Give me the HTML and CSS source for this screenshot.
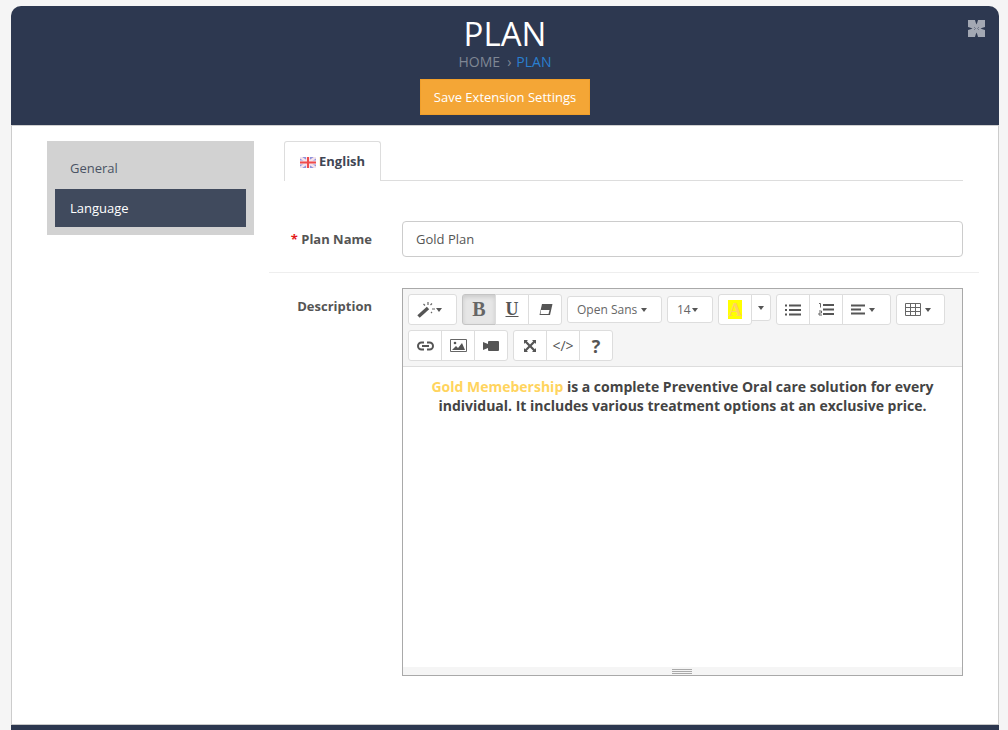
FILE: index.html
```html
<!DOCTYPE html>
<html lang="en">
<head>
<meta charset="utf-8">
<title>Plan</title>
<link rel="stylesheet" href="styles.css">
</head>
<body>
<div class="panel">
  <header class="head">
    <h1 class="title">PLAN</h1>
    <div class="crumbs"><span class="crumb-home">HOME</span><span class="crumb-sep">›</span><span class="crumb-cur">PLAN</span></div>
    <button class="save">Save Extension Settings</button>
    <svg class="expand" width="17" height="17" viewBox="0 0 17 17"><rect width="17" height="17" fill="#a3a8b3"/><path fill="#2d3850" d="M7 0h3L9.300 2.500 8.500 4.500 7.700 2.500zM7 17h3l-.7-2.500-.8-2-.8 2zM0 7v3l2.500-.7 2-.8-2-.8zM17 7v3l-2.500-.7-2-.8 2-.8z"/><path fill="none" stroke="#2d3850" stroke-width=".8" opacity=".55" d="M6 7l1.500 1.500L6 10M11 7L9.500 8.500 11 10"/></svg>
  </header>
  <div class="body">
    <nav class="side">
      <a class="side-item">General</a>
      <a class="side-item side-active">Language</a>
    </nav>
    <main class="content">
      <div class="tabs">
        <div class="tab">
          <svg class="flag" width="16" height="11" viewBox="0 0 16 11"><rect width="16" height="11" fill="#8f93dc"/><path d="M0 0l16 11M16 0L0 11" stroke="#f6e3ea" stroke-width="2.500"/><path d="M8 0v11M0 5.500h16" stroke="#f6e3ea" stroke-width="4"/><path d="M8 0v11M0 5.500h16" stroke="#ee4b4b" stroke-width="2"/></svg>
          <span class="tab-text">English</span>
        </div>
      </div>
      <div class="row row-name">
        <label class="lbl"><span class="req">*</span> Plan Name</label>
        <div class="input">Gold Plan</div>
      </div>
      <div class="row row-desc">
        <label class="lbl lbl-desc">Description</label>
        <div class="editor">
          <div class="toolbar">
            <div class="tools">
              <div class="grp"><button class="btn w49 left"><svg width="19" height="17" viewBox="0 0 19 17"><path d="M1.500 15.500L11 7" stroke="#555" stroke-width="3.500"/><path d="M11 1v3M15 8h3M6.500 3l1.500 1.500M15 2.500L13.500 4M14 11l1 1" stroke="#666" stroke-width="1.200"/></svg><i class="caret-s"></i></button></div>
              <div class="grp"><button class="btn w34 on b">B</button><button class="btn w33 u">U</button><button class="btn w32"><svg width="15" height="13" viewBox="0 0 15 13"><path d="M4 1h10.500l-2.500 11H1.500z" fill="#555"/><path d="M3 7h8.500l-1 4H2.500z" fill="#fff"/></svg></button></div>
              <div class="grp"><button class="btn w95 sel">Open Sans<i class="caret"></i></button></div>
              <div class="grp"><button class="btn w46 sel">14<i class="caret tight"></i></button></div>
              <div class="grp grp-color"><button class="btn w34 color"><span class="hl">A</span></button><button class="btn w19 short"><i class="caret none"></i></button></div>
              <div class="grp"><button class="btn w34"><svg width="16" height="12" viewBox="0 0 16 12"><path d="M4 1.500h12M4 6h12M4 10.500h12" stroke="#555" stroke-width="2"/><path d="M0 1.500h2M0 6h2M0 10.500h2" stroke="#555" stroke-width="2"/></svg></button><button class="btn w33"><svg width="16" height="13" viewBox="0 0 16 13"><path d="M5 2h11M5 6.500h11M5 11h11" stroke="#555" stroke-width="2"/><path d="M1 .5h1.500v4M1 8h2.500v2H1v2h3" stroke="#555" stroke-width=".9" fill="none"/></svg></button><button class="btn w48 left"><svg width="14" height="11" viewBox="0 0 14 11"><path d="M0 1.500h14M0 5.500h10M0 9.500h14" stroke="#555" stroke-width="2"/></svg><i class="caret"></i></button></div>
              <div class="grp"><button class="btn w49 left"><svg width="16" height="13" viewBox="0 0 16 13"><path d="M.5.500h15v12H.5zM.5 4.500h15M.5 8.500h15M5.500.500v12M10.500.500v12" fill="none" stroke="#666"/></svg><i class="caret"></i></button></div>
            </div>
            <div class="tools">
              <div class="grp"><button class="btn w33"><svg width="17" height="10" viewBox="0 0 17 10"><path d="M7 1.500H4.500a3.500 3.500 0 0 0 0 7H7M10 1.500h2.500a3.500 3.500 0 0 1 0 7H10M5 5h7" fill="none" stroke="#555" stroke-width="2"/></svg></button><button class="btn w33"><svg width="17" height="13" viewBox="0 0 17 13"><path d="M.5.500h16v12H.5z" fill="#fff" stroke="#666"/><path d="M2 11l4-4 2 2 4-5 3 7z" fill="#555"/><circle cx="5" cy="4" r="1.300" fill="#555"/></svg></button><button class="btn w34"><svg width="16" height="10" viewBox="0 0 16 10"><rect x="5" y="0" width="11" height="10" rx="1" fill="#555"/><path d="M5 3L0 1v8l5-2z" fill="#555"/></svg></button></div>
              <div class="grp"><button class="btn w33"><svg width="14" height="14" viewBox="0 0 14 14"><path d="M1 1h4L3.800 2.200 7 5.400l3.200-3.200L9 1h4v4l-1.200-1.200L8.600 7l3.200 3.200L13 9v4H9l1.200-1.200L7 8.600l-3.200 3.200L5 13H1V9l1.200 1.200L5.400 7 2.200 3.800 1 5z" fill="#555"/></svg></button><button class="btn w33 code">&lt;/&gt;</button><button class="btn w34 help">?</button></div>
            </div>
          </div>
          <div class="text">
            <p class="para"><span class="gold">Gold Memebership</span> is a complete Preventive Oral care solution for every individual. It includes various treatment options at an exclusive price.</p>
          </div>
          <div class="resize"><i class="grip"></i></div>
        </div>
      </div>
    </main>
  </div>
  <footer class="foot"></footer>
</div>
</body>
</html>
```

FILE: styles.css
```css
* { box-sizing: border-box; }
html, body { height: 100%; }
body {
  margin: 0;
  background: #f5f5f5;
  font-family: "Open Sans", "Liberation Sans", sans-serif;
  color: #444;
  overflow: hidden;
}
.panel {
  width: 988px;
  height: 730px;
  margin: 6px 0 0 11px;
  background: #fff;
  border-left: 1px solid #ccc;
  border-right: 1px solid #ccc;
  border-radius: 10px 10px 0 0;
  display: flex;
  flex-direction: column;
}
.head {
  position: relative;
  height: 120px;
  margin: 0 -1px;
  background: #2d3850;
  border-radius: 10px 10px 0 0;
  border-bottom: 1px solid #d0d0d0;
  text-align: center;
  flex: none;
}
.title {
  margin: 0;
  padding-top: 7px;
  font-size: 33px;
  line-height: 41px;
  font-weight: 400;
  color: #fff;
}
.crumbs {
  font-size: 14px;
  line-height: 15px;
}
.crumb-home { color: #7f8794; }
.crumb-sep { color: #7f8794; margin: 0 5px 0 7px; }
.crumb-cur { color: #2a7fcf; }
.save {
  display: block;
  margin: 10px auto 0;
  width: 170px;
  height: 36px;
  padding: 0;
  background: #f4a636;
  border: 1px solid #f19f2a;
  color: #fff;
  font: 13px/34px "Open Sans", sans-serif;
}
.expand { position: absolute; top: 14px; right: 14px; }
.body {
  flex: none;
  height: 598px;
  display: flex;
  align-items: flex-start;
}
.side {
  width: 207px;
  margin: 15px 15px 0 35px;
  padding: 8px;
  background: #d2d2d2;
  flex: none;
}
.side-item {
  display: block;
  height: 40px;
  padding-left: 15px;
  font-size: 13px;
  line-height: 39px;
  color: #4a5364;
}
.side-active {
  height: 38px;
  line-height: 38px;
  background: #404a5d;
  color: #fff;
}
.content {
  width: 710px;
  flex: none;
  padding-top: 15px;
}
.tabs {
  margin: 0 16px 0 15px;
  height: 40px;
  border-bottom: 1px solid #ddd;
}
.tab {
  width: 97px;
  height: 40px;
  background: #fff;
  border: 1px solid #ddd;
  border-bottom: 0;
  border-radius: 3px 3px 0 0;
  display: flex;
  align-items: center;
  padding: 0 0 0 15px;
  gap: 3px;
  font-size: 13px;
  font-weight: 700;
  color: #3f4654;
}
.tab-text { margin-bottom: 2px; }
.flag { display: block; margin-top: 2px; }
.row { display: flex; }
.row-name {
  margin-top: 40px;
  padding-bottom: 15px;
  border-bottom: 1px solid #eee;
}
.row-desc { padding-top: 15px; }
.lbl {
  width: 103px;
  margin-right: 30px;
  text-align: right;
  font-size: 13px;
  font-weight: 700;
  line-height: 36px;
  color: #555;
}
.lbl-desc { line-height: 36px; }
.req { color: #e31b1b; }
.input {
  width: 561px;
  height: 36px;
  border: 1px solid #ccc;
  border-radius: 4px;
  padding-left: 13px;
  font-size: 13px;
  line-height: 34px;
  color: #555;
}
.editor {
  width: 561px;
  height: 388px;
  border: 1px solid #a9a9a9;
  display: flex;
  flex-direction: column;
}
.toolbar {
  flex: none;
  height: 78px;
  background: #f5f5f5;
  border-bottom: 1px solid #ddd;
  padding: 5px 0 0 5px;
}
.tools {
  display: flex;
  gap: 5px;
  height: 31px;
  margin-bottom: 5px;
}
.grp { display: flex; height: 31px; align-items: center; }
.grp-color { align-items: flex-start; }
.btn {
  height: 31px;
  padding: 0;
  margin: 0 0 0 -1px;
  background: #fff;
  border: 1px solid #ddd;
  border-radius: 0;
  color: #555;
  display: flex;
  align-items: center;
  justify-content: center;
  font-family: "Open Sans", sans-serif;
  font-size: 12px;
}
.btn:first-child { margin-left: 0; border-radius: 3px 0 0 3px; }
.btn:last-child { border-radius: 0 3px 3px 0; }
.btn:only-child { border-radius: 3px; }
.left { justify-content: flex-start; padding-left: 8px; }
.w19 { width: 20px; }
.w32 { width: 34px; }
.w33 { width: 34px; }
.w34 { width: 34px; }
.w46 { width: 46px; }
.w48 { width: 49px; }
.w49 { width: 49px; }
.w95 { width: 95px; }
.sel { height: 27px; color: #666; justify-content: flex-start; padding-left: 9px; }
.short { height: 27px; border-radius: 0 3px 3px 0; }
.on { background: #e6e6e6; border-color: #c4c4c4; box-shadow: inset 0 2px 4px rgba(0,0,0,.12); }
.b { font: 700 20px "Liberation Serif", serif; color: #666; }
.u { font: 700 18px "Liberation Serif", serif; text-decoration: underline; color: #555; }
.caret, .caret-s {
  display: inline-block;
  width: 0;
  height: 0;
  margin-left: 4px;
  border-left: 3px solid transparent;
  border-right: 3px solid transparent;
  border-top: 4px solid #555;
}
.caret-s { margin-left: 0; margin-top: 1px; }
.tight { margin-left: 1px; }
.none { margin-left: 0; }
.color { border-radius: 3px 0 3px 3px !important; position: relative; z-index: 1; }
.hl {
  display: block;
  width: 14px;
  height: 19px;
  background: #ff0;
  color: #ffd45e;
  font: 700 19px/19px "Liberation Serif", serif;
  text-align: center;
}
.code { font-size: 14px; color: #555; }
.help { font-size: 18px; font-weight: 700; color: #555; }
.text {
  flex: 1;
  padding: 10px;
  background: #fff;
}
.para {
  margin: 0;
  text-align: center;
  font-size: 14px;
  line-height: 19px;
  font-weight: 700;
  color: #444;
}
.gold { color: #ffd45e; }
.resize {
  flex: none;
  height: 8px;
  background: #f5f5f5;
  display: flex;
  justify-content: center;
}
.grip {
  display: block;
  width: 20px;
  height: 5px;
  margin: 2px 2px 0 0;
  border-top: 1px solid #a9a9a9;
  border-bottom: 1px solid #a9a9a9;
  background: linear-gradient(#a9a9a9, #a9a9a9) center / 100% 1px no-repeat;
}
.foot {
  flex: none;
  margin: 0 -1px;
  height: 6px;
  background: #2d3850;
  border-top: 1px solid #c9c9c9;
}
```
